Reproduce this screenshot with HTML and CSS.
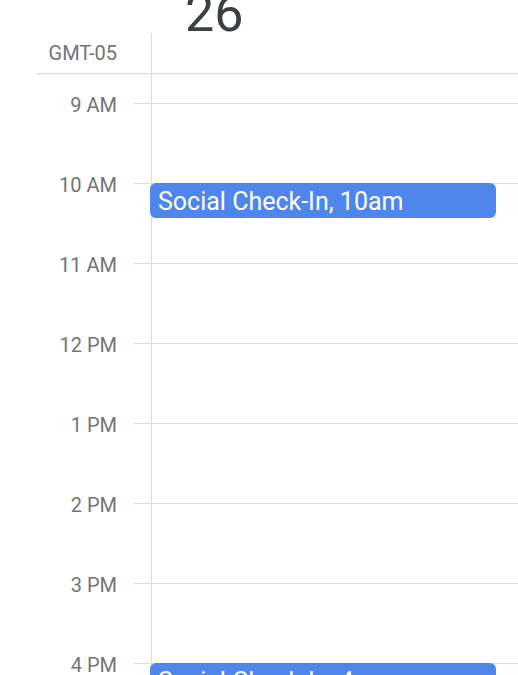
FILE: index.html
```html
<!DOCTYPE html>
<html lang="en">
<head>
    <meta charset="UTF-8" />
    <meta name="viewport" content="width=device-width, initial-scale=1.0" />
    <title>Day view</title>
    <link rel="stylesheet" href="styles.css">
</head>
<body>
<header class="day-header">
    <div class="date-row">
        <span class="date-num">26</span>
    </div>
    <div class="tz-row">
        <div class="tz">GMT-05</div>
        <div class="tz-col"></div>
    </div>
</header>
<main class="day-grid">
    <div class="hour-row spacer">
        <div class="label"></div>
        <div class="tick"></div>
        <div class="cell"></div>
    </div>
    <div class="hour-row">
        <div class="label">9 AM</div>
        <div class="tick"></div>
        <div class="cell"></div>
    </div>
    <div class="hour-row">
        <div class="label">10 AM</div>
        <div class="tick"></div>
        <div class="cell">
            <div class="event">Social Check-In, 10am</div>
        </div>
    </div>
    <div class="hour-row">
        <div class="label">11 AM</div>
        <div class="tick"></div>
        <div class="cell"></div>
    </div>
    <div class="hour-row">
        <div class="label">12 PM</div>
        <div class="tick"></div>
        <div class="cell"></div>
    </div>
    <div class="hour-row">
        <div class="label">1 PM</div>
        <div class="tick"></div>
        <div class="cell"></div>
    </div>
    <div class="hour-row">
        <div class="label">2 PM</div>
        <div class="tick"></div>
        <div class="cell"></div>
    </div>
    <div class="hour-row">
        <div class="label">3 PM</div>
        <div class="tick"></div>
        <div class="cell"></div>
    </div>
    <div class="hour-row">
        <div class="label">4 PM</div>
        <div class="tick"></div>
        <div class="cell">
            <div class="event">Social Check-In, 4pm</div>
        </div>
    </div>
</main>
</body>
</html>
```

FILE: styles.css
```css
html,
body {
  height: 675px;
  overflow: hidden;
}

body {
  margin: 0;
  font-family: Roboto, "Liberation Sans", sans-serif;
  background-color: #fff;
  color: #3c4043;
}

.day-header {
  position: relative;
}

.day-header::after {
  content: "";
  display: block;
  height: 1px;
  margin-left: 37px;
  background-color: #dadce0;
  box-shadow: 0 1px 3px rgba(60, 64, 67, 0.15);
}

.date-row {
  height: 33px;
  overflow: hidden;
  padding-left: 185px;
}

.date-num {
  display: block;
  margin-top: -12px;
  font-size: 52px;
  line-height: 52px;
  color: #3c4043;
}

.tz-row {
  display: flex;
  height: 40px;
}

.tz {
  width: 117px;
  padding-top: 10px;
  text-align: right;
  font-size: 20px;
  line-height: 20px;
  color: #70757a;
}

.tz-col {
  margin-left: 34px;
  border-left: 1px solid #dadce0;
}

.hour-row {
  display: flex;
  height: 80px;
}

.hour-row.spacer {
  height: 29px;
}

.label {
  width: 117px;
  flex-shrink: 0;
  margin-top: -8px;
  text-align: right;
  font-size: 20px;
  line-height: 20px;
  color: #70757a;
}

.tick {
  width: 17px;
  margin-left: 17px;
  border-top: 1px solid #dadce0;
}

.cell {
  flex: 1;
  position: relative;
  border-top: 1px solid #dadce0;
  border-left: 1px solid #dadce0;
}

.spacer .tick,
.spacer .cell {
  border-top: none;
}

.event {
  position: absolute;
  top: -1px;
  left: -2px;
  right: 22px;
  height: 35px;
  padding-left: 8px;
  border-radius: 6px;
  background-color: #4e86eb;
  color: #fff;
  font-size: 25px;
  line-height: 38px;
  white-space: nowrap;
  overflow: hidden;
}
```
